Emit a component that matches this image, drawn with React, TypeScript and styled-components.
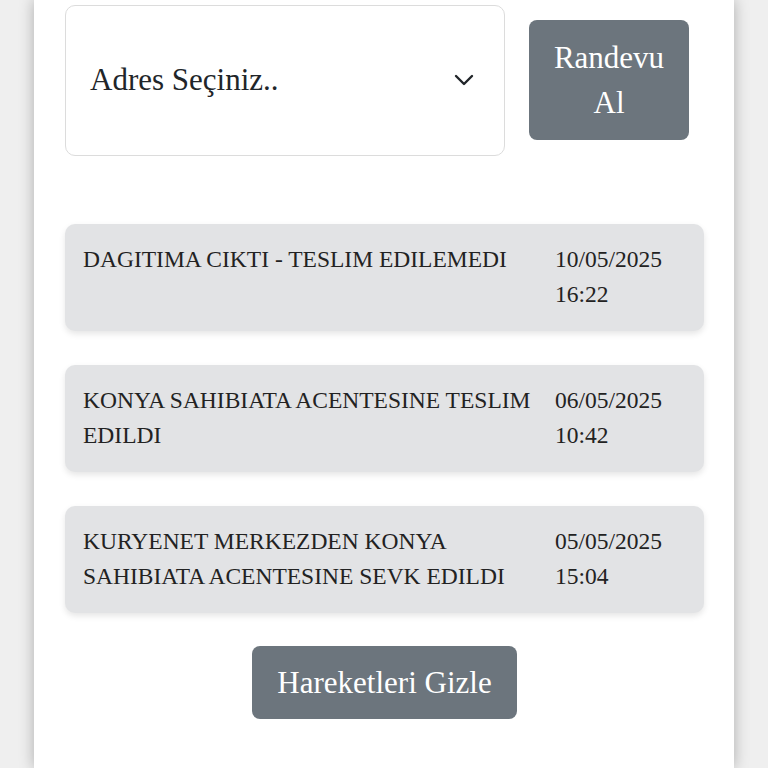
import * as React from 'react';
import styled, { createGlobalStyle } from 'styled-components';

const GlobalStyle = createGlobalStyle`
  html, body {
    margin: 0;
    padding: 0;
    background: #efefef;
    font-family: 'Liberation Serif', 'Times New Roman', serif;
  }
`;

const Panel = styled.div`
  width: 700px;
  min-height: 768px;
  margin: 0 auto;
  background: #ffffff;
  box-shadow: 0 0 14px rgba(0, 0, 0, 0.28);
  padding: 5px 30px 40px 31px;
  box-sizing: border-box;
`;

const TopRow = styled.div`
  display: flex;
  align-items: flex-start;
  gap: 24px;
`;

const SelectBox = styled.div`
  width: 440px;
  height: 151px;
  box-sizing: border-box;
  border: 1px solid #dcdcdc;
  border-radius: 10px;
  display: flex;
  align-items: center;
  justify-content: space-between;
  padding: 0 30px 2px 24px;
  font-size: 31px;
  color: #212529;
  background: #fff;

  svg {
    width: 20px;
    height: 12px;
  }
`;

const GreyButton = styled.button<{ $width?: number }>`
  font-family: 'Liberation Serif', 'Times New Roman', serif;
  background: #6c757d;
  color: #ffffff;
  border: none;
  border-radius: 8px;
  font-size: 31px;
  line-height: 45px;
  cursor: pointer;
  width: ${(p) => (p.$width ? `${p.$width}px` : 'auto')};
`;

const RandevuButton = styled(GreyButton)`
  margin-top: 15px;
  height: 120px;
  padding: 0 10px;
`;

const Moves = styled.div`
  margin-top: 68px;
  display: flex;
  flex-direction: column;
  gap: 34px;
`;

const MoveCard = styled.div`
  background: #e2e3e5;
  border-radius: 10px;
  box-shadow: 0 3px 6px rgba(0, 0, 0, 0.1);
  padding: 18px 18px 19px;
  display: grid;
  grid-template-columns: 1fr 131px;
  gap: 20px;
  font-size: 23.5px;
  line-height: 35px;
  color: #222222;
  min-height: 70px;
`;

const MoveText = styled.div``;
const MoveDate = styled.div``;

const Footer = styled.div`
  display: flex;
  justify-content: center;
  margin-top: 33px;
`;

const HideButton = styled(GreyButton)`
  height: 73px;
  padding: 0 25px;
`;

const moves = [
  { text: 'DAGITIMA CIKTI - TESLIM EDILEMEDI', date: '10/05/2025', time: '16:22' },
  { text: 'KONYA SAHIBIATA ACENTESINE TESLIM EDILDI', date: '06/05/2025', time: '10:42' },
  { text: 'KURYENET MERKEZDEN KONYA SAHIBIATA ACENTESINE SEVK EDILDI', date: '05/05/2025', time: '15:04' },
];

export default function App() {
  return (
    <>
      <GlobalStyle />
      <Panel>
        <TopRow>
          <SelectBox>
            <span>Adres Seçiniz..</span>
            <svg viewBox="0 0 20 12" fill="none">
              <polyline points="2,2 10,10 18,2" stroke="#212529" strokeWidth="2.4" strokeLinecap="round" strokeLinejoin="round" />
            </svg>
          </SelectBox>
          <RandevuButton $width={160}>
            Randevu
            <br />
            Al
          </RandevuButton>
        </TopRow>
        <Moves>
          {moves.map((m, i) => (
            <MoveCard key={i}>
              <MoveText>{m.text}</MoveText>
              <MoveDate>
                {m.date}
                <br />
                {m.time}
              </MoveDate>
            </MoveCard>
          ))}
        </Moves>
        <Footer>
          <HideButton>Hareketleri Gizle</HideButton>
        </Footer>
      </Panel>
    </>
  );
}
